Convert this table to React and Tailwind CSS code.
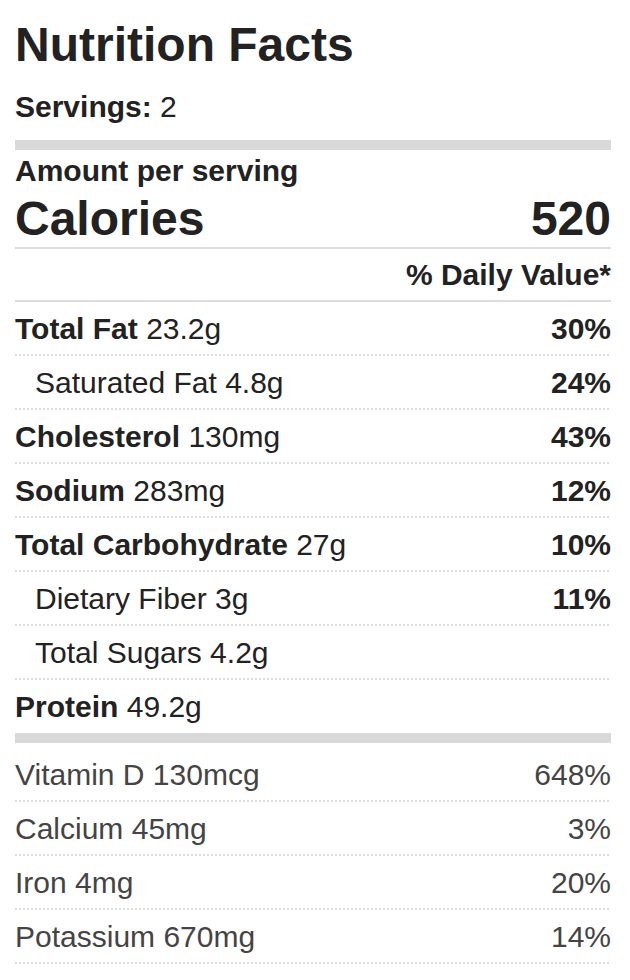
import React from "react";

const nutrients = [
  { name: "Total Fat", amount: "23.2g", dv: "30%" },
  { name: "Saturated Fat", amount: "4.8g", dv: "24%", sub: true },
  { name: "Cholesterol", amount: "130mg", dv: "43%" },
  { name: "Sodium", amount: "283mg", dv: "12%" },
  { name: "Total Carbohydrate", amount: "27g", dv: "10%" },
  { name: "Dietary Fiber", amount: "3g", dv: "11%", sub: true },
  { name: "Total Sugars", amount: "4.2g", sub: true },
  { name: "Protein", amount: "49.2g", last: true },
];

const vitamins = [
  { name: "Vitamin D", amount: "130mcg", dv: "648%" },
  { name: "Calcium", amount: "45mg", dv: "3%" },
  { name: "Iron", amount: "4mg", dv: "20%" },
  { name: "Potassium", amount: "670mg", dv: "14%" },
];

// dotted separator, 2px dots on a 4px step
function Dots() {
  return <div className="h-[2px] bg-[repeating-linear-gradient(to_right,#dcdcdc_0px,#dcdcdc_2px,transparent_2px,transparent_4px)]" />;
}

function NutrientRow({ item }) {
  return (
    <div>
      <div className="flex items-center justify-between h-[52px] text-[30px] text-[#222]">
        {item.sub ? (
          <span className="pl-5">
            {item.name} {item.amount}
          </span>
        ) : (
          <span>
            <span className="font-bold">{item.name}</span> {item.amount}
          </span>
        )}
        {item.dv && <span className="font-bold">{item.dv}</span>}
      </div>
      {!item.last && <Dots />}
    </div>
  );
}

export default function App() {
  return (
    <div className="bg-white min-h-[980px] pl-[15px] pr-[19px] pt-[14px] text-[#222] font-[family-name:'Liberation_Sans',Arial,sans-serif]">
      <h1 className="text-[48px] font-bold leading-[62px]">Nutrition Facts</h1>
      <div className="text-[30px] leading-[40px] mt-[11px]">
        <span className="font-bold">Servings:</span> 2
      </div>
      <div className="h-[10px] bg-[#d9d9d9] mt-[13px]" />

      <div className="text-[30px] font-bold leading-[34px] mt-[4px]">Amount per serving</div>
      <div className="flex justify-between items-center text-[48px] font-bold leading-[56px] border-b-2 border-[#dcdcdc] pt-[3px]">
        <span>Calories</span>
        <span>520</span>
      </div>
      <div className="text-right text-[30px] font-bold h-[53px] leading-[52px] border-b-2 border-[#dcdcdc]">
        % Daily Value*
      </div>

      <div>
        {nutrients.map((item, i) => (
          <NutrientRow key={i} item={item} />
        ))}
      </div>
      <div className="h-[10px] bg-[#d9d9d9] mt-[1px]" />

      <div className="mt-[5px]">
        {vitamins.map((v, i) => (
          <div key={i}>
            <div className="flex items-center justify-between h-[52px] text-[30px] text-[#444]">
              <span>
                {v.name} {v.amount}
              </span>
              <span>{v.dv}</span>
            </div>
            <Dots />
          </div>
        ))}
      </div>
    </div>
  );
}
